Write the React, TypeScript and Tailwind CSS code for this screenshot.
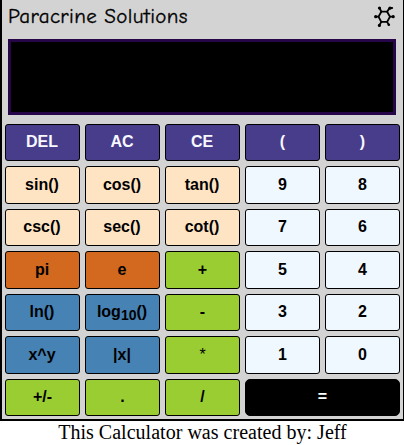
import React from "react";

type Key = { label: React.ReactNode; color: string; wide?: boolean };

const purple = "bg-[#483d8b] text-[#f8f8ff]";
const bisque = "bg-[#ffe4c4] pr-[1px]";
const blue = "bg-[#f0f8ff]";
const orange = "bg-[#d2691e] pr-[1px]";
const steel = "bg-[#4682b4] pr-[1px]";
const green = "bg-[#9acd32]";

const keys: Key[] = [
  { label: "DEL", color: "bg-[#483d8b] text-[#f8f8ff] pr-[1px]" },
  { label: "AC", color: "bg-[#483d8b] text-[#f8f8ff] pr-[1px]" },
  { label: "CE", color: "bg-[#483d8b] text-[#f8f8ff] pr-[1px]" },
  { label: "(", color: purple },
  { label: ")", color: purple },
  { label: "sin()", color: bisque },
  { label: "cos()", color: bisque },
  { label: "tan()", color: bisque },
  { label: "9", color: blue },
  { label: "8", color: blue },
  { label: "csc()", color: bisque },
  { label: "sec()", color: bisque },
  { label: "cot()", color: bisque },
  { label: "7", color: blue },
  { label: "6", color: blue },
  { label: "pi", color: orange },
  { label: "e", color: orange },
  { label: "+", color: green },
  { label: "5", color: blue },
  { label: "4", color: blue },
  { label: "ln()", color: steel },
  { label: <span>log<sub className="bottom-[-3px] text-[14px]">10</sub>()</span>, color: steel },
  { label: "-", color: green },
  { label: "3", color: blue },
  { label: "2", color: blue },
  { label: "x^y", color: steel },
  { label: "|x|", color: steel },
  { label: <span className="font-normal">*</span>, color: green },
  { label: "1", color: blue },
  { label: "0", color: blue },
  { label: "+/-", color: green },
  { label: ".", color: green },
  { label: "/", color: green },
  { label: "=", color: "bg-black text-white", wide: true },
];

function Logo() {
  return (
    <svg className="h-[22px] w-[22px]" viewBox="0 0 22 22" fill="none" stroke="black" strokeWidth="1.8" strokeLinecap="round">
      <path d="M8.3 5.7h5.8l2.9 5-2.9 5.2H8.3l-2.8-5.2z" />
      <path d="M8.3 5.7 6.5 2M14.1 5.7 16.6 2h2.6M17 10.7h3M14.1 15.9l1.6 2.7M8.3 15.9l-1.9 3.3M5.5 10.7H2.7" />
      <g fill="black" stroke="none">
        <circle cx="6.5" cy="2" r="1.6" />
        <circle cx="17" cy="2.2" r="1.6" />
        <circle cx="20.2" cy="10.7" r="1.6" />
        <circle cx="15.8" cy="18.7" r="1.3" />
        <circle cx="6.4" cy="19.4" r="1.6" />
        <circle cx="2.7" cy="10.7" r="1.6" />
      </g>
    </svg>
  );
}

export default function App() {
  return (
    <div className="h-[445px] w-[404px] overflow-hidden bg-white text-black">
      <main className="h-[421px] w-[405px] border-x-2 border-b-2 border-black bg-[#d3d3d3]">
        <header className="flex h-[39px] justify-between pl-[6px] pr-[8px]">
          <h1 className="whitespace-nowrap pt-[2px] font-['Comic_Sans_MS','Comic_Neue','Open_Sans',sans-serif] text-[21px] leading-[28px] tracking-[0.35px] [-webkit-text-stroke:0.3px_black]">
            Paracrine Solutions
          </h1>
          <div className="pt-[6px]">
            <Logo />
          </div>
        </header>
        <div className="ml-[6px] h-[76px] w-[388px] border-[3px] border-[#260649] bg-black" />
        <div className="ml-[3px] mt-[8.7px] grid w-[395px] auto-rows-[37.5px] grid-cols-5 gap-[5px]">
          {keys.map((key, i) => (
            <button
              key={i}
              className={`flex items-center justify-center border border-black font-['Liberation_Sans',Arial,sans-serif] text-[16px] font-bold leading-[18px] ${key.color} ${key.wide ? "col-span-2 rounded-[5px]" : "rounded-[3px]"}`}
            >
              {key.label}
            </button>
          ))}
        </div>
      </main>
      <p className="pl-[1px] text-center font-['Liberation_Serif','Times_New_Roman',serif] text-[20px] leading-[23px] tracking-[0.02px]">
        This Calculator was created by: Jeff
      </p>
    </div>
  );
}
